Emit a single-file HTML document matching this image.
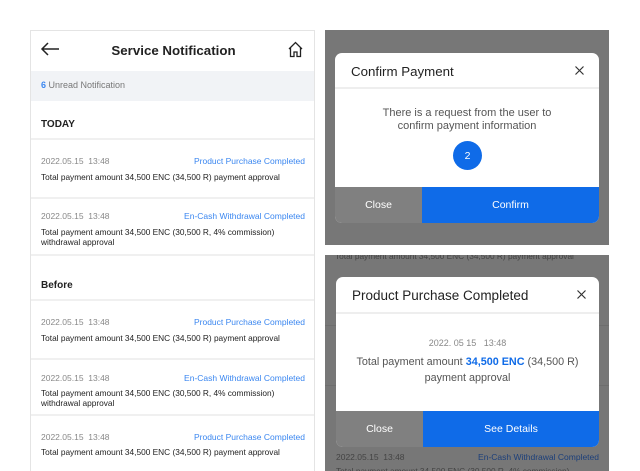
<!DOCTYPE html>
<html><head><meta charset="utf-8"><style>
*{margin:0;padding:0;box-sizing:border-box}
body{width:640px;height:471px;background:#fff;position:relative;overflow:hidden;font-family:"Liberation Sans",sans-serif;color:#222}
.a{position:absolute;white-space:nowrap}
.lp{position:absolute;left:30px;top:30px;width:285px;height:441px;border:1px solid #e4e4e4;border-bottom:none;overflow:hidden}
.hr{position:absolute;left:0;width:100%;height:2px;background:#f0f0f0}
.d{font-size:8.5px;color:#888}
.t{font-size:8.5px;color:#3b87f0;right:9px}
.b{font-size:8.3px;color:#222;line-height:10px}
.gp{position:absolute;left:325px;width:284px;background:#777;overflow:hidden}
.m{position:absolute;background:#fff;border-radius:7px;overflow:hidden}
.btn{position:absolute;bottom:0;height:36px;color:#fff;font-size:10.5px;display:flex;align-items:center;justify-content:center}
</style></head><body>
<div class="lp">
 <svg class="a" style="left:9px;top:11px" width="20" height="14" viewBox="0 0 20 14"><path d="M19 7H2M8 1L2 7l6 6" stroke="#222" stroke-width="1.5" fill="none"/></svg>
 <div class="a" style="left:0;width:285px;text-align:center;top:12px;font-size:13.3px;font-weight:bold">Service Notification</div>
 <svg class="a" style="left:256px;top:10px" width="17" height="17" viewBox="0 0 17 17"><path d="M2 8L8.5 1.5 15 8M3.5 6.5V15.5h3.5v-4.5h3v4.5h3.5V6.5" stroke="#222" stroke-width="1.3" fill="none"/></svg>
 <div class="a" style="left:0;top:40px;width:285px;height:30px;background:#f1f3f6"></div>
 <div class="a" style="left:10px;top:49px;font-size:9px;color:#777"><b style="color:#3b87f0">6</b> Unread Notification</div>
 <div class="a" style="left:10px;top:88px;font-size:10px;font-weight:bold">TODAY</div>
 <div class="hr" style="top:107px"></div>
 <div class="a d" style="left:10px;top:125px">2022.05.15&nbsp; 13:48</div><div class="a t" style="top:125px">Product Purchase Completed</div>
 <div class="a b" style="left:10px;top:141px">Total payment amount 34,500 ENC (34,500 R) payment approval</div>
 <div class="hr" style="top:166px"></div>
 <div class="a d" style="left:10px;top:180px">2022.05.15&nbsp; 13:48</div><div class="a t" style="top:180px">En-Cash Withdrawal Completed</div>
 <div class="a b" style="left:10px;top:196px">Total payment amount 34,500 ENC (30,500 R, 4% commission)<br>withdrawal approval</div>
 <div class="hr" style="top:223px"></div>
 <div class="a" style="left:10px;top:249px;font-size:10px;font-weight:bold">Before</div>
 <div class="hr" style="top:268px"></div>
 <div class="a d" style="left:10px;top:286px">2022.05.15&nbsp; 13:48</div><div class="a t" style="top:286px">Product Purchase Completed</div>
 <div class="a b" style="left:10px;top:302px">Total payment amount 34,500 ENC (34,500 R) payment approval</div>
 <div class="hr" style="top:327px"></div>
 <div class="a d" style="left:10px;top:342px">2022.05.15&nbsp; 13:48</div><div class="a t" style="top:342px">En-Cash Withdrawal Completed</div>
 <div class="a b" style="left:10px;top:357px">Total payment amount 34,500 ENC (30,500 R, 4% commission)<br>withdrawal approval</div>
 <div class="hr" style="top:383px"></div>
 <div class="a d" style="left:10px;top:401px">2022.05.15&nbsp; 13:48</div><div class="a t" style="top:401px">Product Purchase Completed</div>
 <div class="a b" style="left:10px;top:416px">Total payment amount 34,500 ENC (34,500 R) payment approval</div>
</div>

<div class="gp" style="top:30px;height:215px">
 <div class="m" style="left:10px;top:23px;width:264px;height:170px">
  <div class="a" style="left:16px;top:11px;font-size:13.3px">Confirm Payment</div>
  <svg class="a" style="left:240px;top:13px" width="9" height="9" viewBox="0 0 9 9"><path d="M0.5 0.5l8 8M8.5 0.5l-8 8" stroke="#333" stroke-width="1.2"/></svg>
  <div class="a" style="left:0;top:34px;width:100%;height:2px;background:#eee"></div>
  <div class="a" style="left:0;width:100%;top:54px;text-align:center;font-size:11px;color:#555;line-height:13px">There is a request from the user to<br>confirm payment information</div>
  <div class="a" style="left:118px;top:88px;width:29px;height:29px;border-radius:50%;background:#0f6be8;color:#fff;font-size:10.5px;display:flex;align-items:center;justify-content:center">2</div>
  <div class="btn" style="left:0;width:87px;background:#808080">Close</div>
  <div class="btn" style="left:87px;width:177px;background:#0f6be8">Confirm</div>
 </div>
</div>

<div class="gp" style="top:255px;height:216px">
 <div class="a" style="left:10px;top:-4px;font-size:8.3px;color:#444">Total payment amount 34,500 ENC (34,500 R) payment approval</div>
 <div class="a" style="left:0;top:70px;width:100%;height:1px;background:#6e6e6e"></div>
 <div class="a" style="left:0;top:130px;width:100%;height:1px;background:#6e6e6e"></div>
 <div class="m" style="left:11px;top:22px;width:263px;height:170px">
  <div class="a" style="left:16px;top:11px;font-size:13.5px">Product Purchase Completed</div>
  <svg class="a" style="left:241px;top:13px" width="9" height="9" viewBox="0 0 9 9"><path d="M0.5 0.5l8 8M8.5 0.5l-8 8" stroke="#333" stroke-width="1.2"/></svg>
  <div class="a" style="left:0;top:35px;width:100%;height:2px;background:#eee"></div>
  <div class="a" style="left:0;width:100%;top:61px;text-align:center;font-size:9px;color:#888">2022. 05 15&nbsp;&nbsp; 13:48</div>
  <div class="a" style="left:0;width:100%;top:77px;text-align:center;font-size:10.8px;color:#555;line-height:16px">Total payment amount <b style="color:#0f6be8">34,500 ENC</b> (34,500 R)<br>payment approval</div>
  <div class="btn" style="left:0;width:87px;background:#808080">Close</div>
  <div class="btn" style="left:87px;width:176px;background:#0f6be8">See Details</div>
 </div>
 <div class="a" style="left:11px;top:197px;font-size:8.5px;color:#444">2022.05.15&nbsp; 13:48</div>
 <div class="a" style="right:10px;top:197px;font-size:8.5px;color:#1c3f7a">En-Cash Withdrawal Completed</div>
 <div class="a" style="left:11px;top:211px;font-size:8.3px;color:#444">Total payment amount 34,500 ENC (30,500 R, 4% commission)</div>
</div>
</body></html>
